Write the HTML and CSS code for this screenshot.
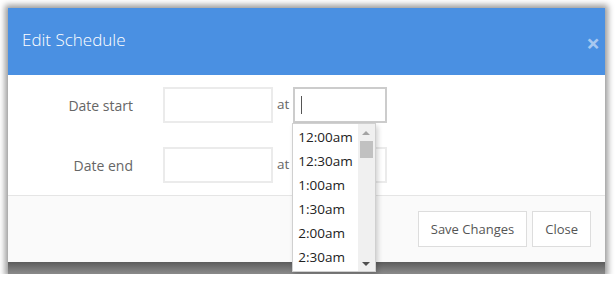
FILE: index.html
```html
<!DOCTYPE html>
<html>
<head>
<meta charset="utf-8">
<link rel="stylesheet" href="styles.css">
</head>
<body>
<div class="frame">
  <div class="modal">
    <div class="modal-header">
      <h4 class="modal-title">Edit Schedule</h4>
      <span class="close">&times;</span>
    </div>
    <div class="modal-body">
      <div class="row">
        <label class="label">Date start</label>
        <input class="date" type="text">
        <span class="at">at</span>
        <div class="time-wrap">
          <div class="time focused"><span class="caret"></span></div>
          <div class="dropdown">
            <ul class="list">
              <li>12:00am</li>
              <li>12:30am</li>
              <li>1:00am</li>
              <li>1:30am</li>
              <li>2:00am</li>
              <li>2:30am</li>
            </ul>
            <div class="scrollbar">
              <span class="arrow up"></span>
              <span class="thumb"></span>
              <span class="arrow down"></span>
            </div>
          </div>
        </div>
      </div>
      <div class="row">
        <label class="label">Date end</label>
        <input class="date" type="text">
        <span class="at">at</span>
        <div class="time-wrap">
          <div class="time"></div>
        </div>
      </div>
    </div>
    <div class="modal-footer">
      <button class="btn">Save Changes</button>
      <button class="btn">Close</button>
    </div>
  </div>
  <div class="strip"></div>
</div>
</body>
</html>
```
FILE: styles.css
```css
html, body {
  margin: 0;
  padding: 0;
  background: #ffffff;
  font-family: "Open Sans", "Liberation Sans", sans-serif;
}
.frame {
  width: 597px;
  margin: 8px 0 0 8px;
  box-shadow: 0 0 6px 3px rgba(0, 0, 0, 0.4);
  position: relative;
}
.modal {
  background: #ffffff;
}
.modal-header {
  height: 67px;
  background: #4a90e2;
  display: flex;
  align-items: center;
  justify-content: space-between;
  padding: 0 5px 0 14px;
  box-sizing: border-box;
}
.modal-title {
  margin: 0;
  color: #ffffff;
  font-size: 17px;
  font-weight: 300;
  padding-bottom: 5px;
}
.close {
  color: #a8c8f0;
  font-size: 24px;
  font-weight: 700;
  line-height: 1;
  margin-top: 2px;
}
.modal-body {
  padding: 12px 0 12px 0;
  display: flex;
  flex-direction: column;
  gap: 24px;
  border-bottom: 1px solid #e5e5e5;
}
.row {
  display: flex;
  align-items: center;
  height: 36px;
}
.label {
  width: 125px;
  text-align: right;
  color: #666666;
  font-size: 14px;
  margin-right: 30px;
}
.date {
  width: 110px;
  height: 36px;
  box-sizing: border-box;
  border: 2px solid #ebebeb;
  background: #fff;
  margin: 0;
  padding: 0;
  outline: none;
}
.at {
  color: #666666;
  font-size: 13.5px;
  margin: 0 4px 2px 4px;
}
.time-wrap {
  position: relative;
}
.time {
  width: 94px;
  height: 36px;
  box-sizing: border-box;
  border: 2px solid #ebebeb;
  background: #fff;
}
.time.focused {
  border-color: #cccccc;
  display: flex;
  align-items: center;
  padding-left: 6px;
}
.caret {
  width: 1px;
  height: 18px;
  background: #555;
}
.dropdown {
  position: absolute;
  left: -1px;
  top: 36px;
  width: 84px;
  height: 149px;
  background: #fff;
  border: 1px solid #d0d0d0;
  box-sizing: border-box;
  box-shadow: 2px 3px 5px rgba(0, 0, 0, 0.18);
  display: flex;
  z-index: 5;
}
.list {
  list-style: none;
  margin: 0;
  padding: 1px 0 0 5px;
  flex: 1;
}
.list li {
  height: 24px;
  line-height: 24px;
  font-size: 13.5px;
  color: #222222;
}
.scrollbar {
  width: 17px;
  background: #f0f0f0;
  position: relative;
}
.thumb {
  position: absolute;
  left: 2px;
  top: 17px;
  width: 13px;
  height: 17px;
  background: #c1c1c1;
}
.arrow {
  position: absolute;
  left: 4px;
  width: 0;
  height: 0;
  border-left: 4px solid transparent;
  border-right: 4px solid transparent;
}
.arrow.up {
  top: 7px;
  border-bottom: 4px solid #a3a3a3;
}
.arrow.down {
  bottom: 5px;
  border-top: 4px solid #505050;
}
.modal-footer {
  background: #fafafa;
  height: 66px;
  box-sizing: border-box;
  display: flex;
  justify-content: flex-end;
  align-items: center;
  gap: 5px;
  padding: 0 14px 0 0;
}
.btn {
  height: 36px;
  padding: 0 12px;
  background: #fff;
  border: 1px solid #dddddd;
  color: #555555;
  font-family: "Open Sans", "Liberation Sans", sans-serif;
  font-size: 13px;
  border-radius: 0;
}
.strip {
  height: 12px;
  background: linear-gradient(#5c5c5c, #7a7a7a 60%, #8a8a8a);
}
```
